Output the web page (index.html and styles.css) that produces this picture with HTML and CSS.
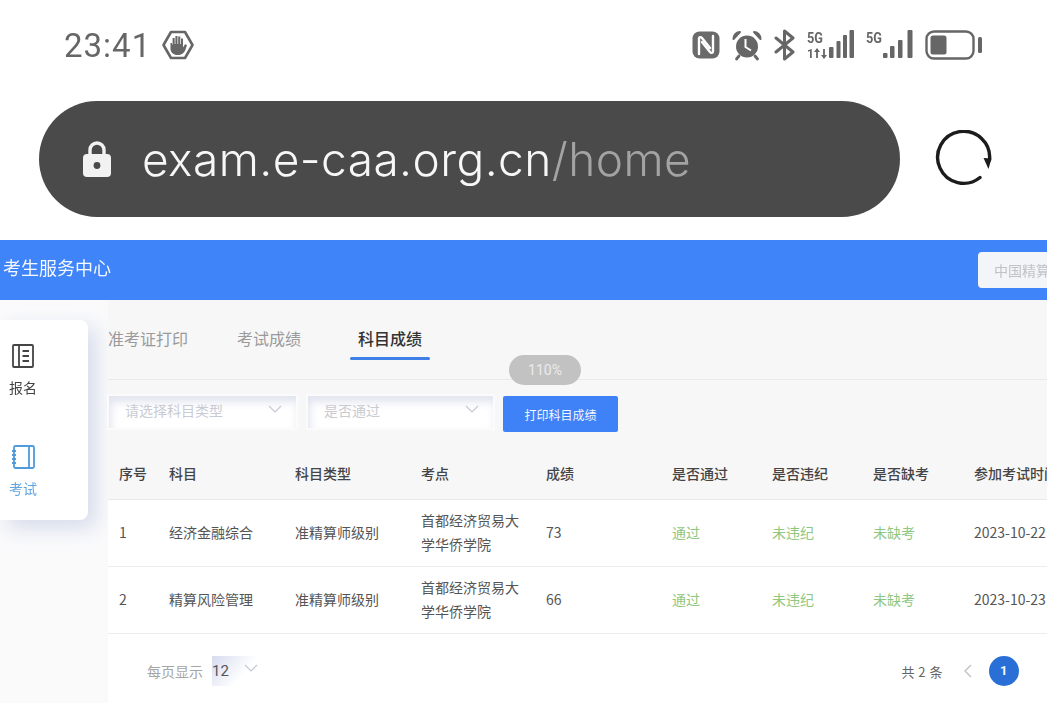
FILE: index.html
```html
<!DOCTYPE html>
<html lang="zh-CN">
<head>
    <meta charset="UTF-8">
    <meta name="viewport" content="width=device-width, initial-scale=1.0">
    <title>考生服务中心</title>
    <link rel="stylesheet" href="styles.css">
</head>
<body>
    <!-- Phone status bar -->
    <div class="status-bar">
        <div class="status-left">
            <span class="clock">23:41</span>
            <svg class="icon-hand" viewBox="0 0 32 32" width="32" height="32">
                <path d="M9 3h14l7.500 13L23 29H9L1.500 16z" fill="none" stroke="#666" stroke-width="2.600" stroke-linejoin="round"/>
                <path d="M8.500 14v5.500c0 4 3 6.500 7 6.500s6.500-1.500 8-5.500l1.500-4.500-2-.8-2 3.300V9.500h-2V15h-.7V7.500h-2.100V15H15.500V7h-2.100v8h-.7V9h-2.100v6.500H10V14z" fill="#666"/>
            </svg>
        </div>
        <div class="status-right">
            <svg viewBox="0 0 28 28" width="28" height="28">
                <rect x="0.500" y="0.500" width="27" height="27" rx="7" fill="#6a6a6a"/>
                <path d="M7 23V7.500c0-1.800 1.800-1.800 3-.5l8 10M21 5v15.500c0 1.800-1.800 1.800-3 .5l-8-10" fill="none" stroke="#fff" stroke-width="2.400" stroke-linecap="round"/>
            </svg>
            <svg viewBox="0 0 32 32" width="32" height="32">
                <circle cx="16" cy="17.500" r="11" fill="#666"/>
                <path d="M14.500 10v8l5.500 3.500" fill="none" stroke="#fff" stroke-width="2"/>
                <path d="M2.500 10C2.500 6 5.500 3 9 3L2.500 10zM29.500 10C29.500 6 26.500 3 23 3L29.500 10z" fill="#666" stroke="#666" stroke-width="2" stroke-linejoin="round"/>
                <path d="M8 27l-2.500 3M24 27l2.500 3" stroke="#666" stroke-width="2.800" stroke-linecap="round"/>
            </svg>
            <svg viewBox="0 0 22 32" width="22" height="32">
                <path d="M2 9l17 14-8.500 7V2L19 9 2 23" fill="none" stroke="#666" stroke-width="3" stroke-linejoin="round" stroke-linecap="round"/>
            </svg>
            <svg class="signal" viewBox="0 0 48 32" width="48" height="32">
                <text x="0" y="14" class="signal-text" textLength="16" lengthAdjust="spacingAndGlyphs">5G</text>
                <text x="0" y="29" class="signal-text small">1</text>
                <path d="M10 29v-9M17 29v-9" stroke="#666" stroke-width="1.800"/>
                <path d="M7 23l3-4 3 4zM14 26l3 4 3-4z" fill="#666"/>
                <rect x="22" y="18" width="4.500" height="11" rx="1" fill="#666"/>
                <rect x="29.500" y="12" width="4" height="17" rx="1" fill="#666"/>
                <rect x="36" y="6" width="4" height="23" rx="1" fill="#666"/>
                <rect x="42.500" y="1" width="4.500" height="28" rx="1" fill="#666"/>
            </svg>
            <svg class="signal" viewBox="0 0 48 32" width="48" height="32">
                <text x="0" y="14" class="signal-text" textLength="16" lengthAdjust="spacingAndGlyphs">5G</text>
                <rect x="17" y="24" width="4.500" height="5" rx="1" fill="#666"/>
                <rect x="24" y="17" width="4.500" height="12" rx="1" fill="#666"/>
                <rect x="32" y="11" width="4.500" height="18" rx="1" fill="#666"/>
                <rect x="41.500" y="1" width="5" height="28" rx="1" fill="#666"/>
            </svg>
            <svg viewBox="0 0 58 30" width="58" height="30">
                <rect x="1.500" y="1.500" width="47" height="27" rx="7.500" fill="none" stroke="#666" stroke-width="2.400"/>
                <rect x="5.500" y="5.500" width="16" height="19" rx="2.500" fill="#666"/>
                <rect x="53" y="7" width="4" height="16" rx="1.500" fill="#666"/>
            </svg>
        </div>
    </div>

    <!-- Browser address bar -->
    <div class="address-row">
        <div class="address-pill">
            <svg class="icon-lock" viewBox="0 0 30 38" width="30" height="38">
                <path d="M8 17V10a7 7 0 0 1 14 0v7" fill="none" stroke="#f2f2f2" stroke-width="3.400"/>
                <rect x="1" y="14" width="28" height="23" rx="4" fill="#f2f2f2"/>
                <circle cx="15" cy="25.500" r="3.400" fill="#4a4a4a"/>
            </svg>
            <span class="url">exam.e-caa.org.cn<span class="url-path">/home</span></span>
        </div>
        <svg class="icon-reload" viewBox="0 0 58 58" width="58" height="58">
            <path d="M46 47.500A26 26 0 1 1 55.500 30" fill="none" stroke="#1c1c1c" stroke-width="3.400" stroke-linecap="round"/>
            <path d="M49.500 28l8 .5-3 10.500z" fill="#1c1c1c"/>
        </svg>
    </div>

    <!-- App header -->
    <header class="app-header">
        <span class="app-title">考生服务中心</span>
        <div class="org-select">中国精算师协会</div>
    </header>

    <div class="app-body">
        <aside class="side-card">
            <div class="side-item">
                <svg viewBox="0 0 24 26" width="24" height="26">
                    <rect x="2" y="2" width="20" height="22" rx="1" fill="none" stroke="#444" stroke-width="1.800"/>
                    <path d="M8 2v22M11.500 8H18M11.500 13H18M11.500 18H18" fill="none" stroke="#444" stroke-width="1.800"/>
                </svg>
                <span>报名</span>
            </div>
            <div class="side-item active">
                <svg viewBox="0 0 24 26" width="24" height="26">
                    <rect x="3" y="2" width="20" height="22" rx="1.500" fill="none" stroke="#4f9bdc" stroke-width="1.800"/>
                    <path d="M18 2v22M1 7h4M1 11h4M1 15h4M1 19h4" fill="none" stroke="#4f9bdc" stroke-width="1.800"/>
                </svg>
                <span>考试</span>
            </div>
        </aside>

        <main class="content">
            <div class="tabs">
                <div class="tab">准考证打印</div>
                <div class="tab">考试成绩</div>
                <div class="tab active">科目成绩</div>
            </div>

            <div class="filters">
                <div class="select select-type">
                    <span>请选择科目类型</span>
                    <svg class="chevron" viewBox="0 0 14 8" width="14" height="8"><path d="M1 1l6 6 6-6" fill="none" stroke="#c6c9d2" stroke-width="1.200"/></svg>
                </div>
                <div class="select select-pass">
                    <span>是否通过</span>
                    <svg class="chevron" viewBox="0 0 14 8" width="14" height="8"><path d="M1 1l6 6 6-6" fill="none" stroke="#c6c9d2" stroke-width="1.200"/></svg>
                </div>
                <button class="print-btn">打印科目成绩</button>
            </div>

            <table class="score-table">
                <colgroup>
                    <col class="col-no"><col class="col-wide"><col class="col-wide"><col class="col-site"><col class="col-wide">
                    <col class="col-pass"><col class="col-flag"><col class="col-flag"><col class="col-date">
                </colgroup>
                <thead>
                    <tr>
                        <th>序号</th><th>科目</th><th>科目类型</th><th>考点</th><th>成绩</th>
                        <th>是否通过</th><th>是否违纪</th><th>是否缺考</th><th>参加考试时间</th>
                    </tr>
                </thead>
                <tbody>
                    <tr>
                        <td>1</td><td>经济金融综合</td><td>准精算师级别</td><td>首都经济贸易大学华侨学院</td><td>73</td>
                        <td class="ok">通过</td><td class="ok">未违纪</td><td class="ok">未缺考</td><td>2023-10-22</td>
                    </tr>
                    <tr>
                        <td>2</td><td>精算风险管理</td><td>准精算师级别</td><td>首都经济贸易大学华侨学院</td><td>66</td>
                        <td class="ok">通过</td><td class="ok">未违纪</td><td class="ok">未缺考</td><td>2023-10-23</td>
                    </tr>
                </tbody>
            </table>

            <div class="pager">
                <div class="page-size">
                    <span>每页显示</span>
                    <div class="size-select">
                        <span>12</span>
                        <svg viewBox="0 0 14 8" width="14" height="8"><path d="M1 1l6 6 6-6" fill="none" stroke="#c6c9d2" stroke-width="1.200"/></svg>
                    </div>
                </div>
                <div class="page-nav">
                    <span class="total">共 2 条</span>
                    <svg viewBox="0 0 8 14" width="8" height="14"><path d="M7 1L1 7l6 6" fill="none" stroke="#c4c4c4" stroke-width="1.500"/></svg>
                    <span class="page-num">1</span>
                </div>
            </div>

            <div class="zoom-badge">110%</div>
        </main>
    </div>
</body>
</html>
```

FILE: styles.css
```css
* {
    margin: 0;
    padding: 0;
    box-sizing: border-box;
}

html, body {
    width: 1047px;
    height: 703px;
    overflow: hidden;
}

body {
    font-family: 'Noto Sans CJK SC', Roboto, sans-serif;
    background: #fff;
    /* the source is a soft phone capture */
    filter: blur(0.4px);
}

/* Status bar */
.status-bar {
    height: 90px;
    padding: 0 64px;
    display: flex;
    align-items: center;
    justify-content: space-between;
}

.status-left {
    display: flex;
    align-items: center;
    gap: 11px;
}

.clock {
    font-family: Roboto, sans-serif;
    font-size: 33px;
    letter-spacing: 1px;
    color: #666;
}

.status-right {
    display: flex;
    align-items: center;
    gap: 11px;
}

.signal-text {
    font-family: Roboto, sans-serif;
    font-size: 15px;
    font-weight: 700;
    fill: #666;
}

.signal-text.small {
    font-size: 12px;
}

/* Address bar */
.address-row {
    height: 150px;
    padding: 11px 0 23px 39px;
    display: flex;
    align-items: center;
    gap: 34px;
}

.address-pill {
    width: 861px;
    height: 116px;
    border-radius: 58px;
    background: #4a4a4a;
    padding-left: 43px;
    display: flex;
    align-items: center;
    gap: 30px;
}

.url {
    font-family: Inter, sans-serif;
    font-size: 46px;
    font-weight: 300;
    letter-spacing: 0.45px;
    color: #f7f7f7;
}

.url-path {
    color: #a3a3a3;
}

/* App header */
.app-header {
    height: 60px;
    background: #3f84f8;
    padding-left: 3px;
    display: flex;
    align-items: center;
    justify-content: space-between;
    overflow: hidden;
}

.app-title {
    font-size: 18px;
    color: #f4f8ff;
    padding-bottom: 6px;
}

.org-select {
    width: 69px;
    height: 36px;
    flex: none;
    background: #f4f5f8;
    border-radius: 4px 0 0 4px;
    padding-left: 16px;
    font-size: 14px;
    line-height: 36px;
    color: #c0c2c8;
    white-space: nowrap;
    overflow: hidden;
}

.app-body {
    height: 403px;
    display: flex;
    background: #fafafb;
}

/* Left side card */
.side-card {
    width: 88px;
    height: 200px;
    margin-top: 20px;
    margin-right: 20px;
    flex: none;
    background: #fff;
    border-radius: 0 8px 8px 0;
    box-shadow: 8px 8px 20px rgba(190, 200, 225, 0.6);
    padding-top: 23px;
    display: flex;
    flex-direction: column;
    gap: 33px;
}

.side-item {
    width: 46px;
    height: 68px;
    display: flex;
    flex-direction: column;
    align-items: center;
    gap: 8px;
    font-size: 14px;
    color: #444;
}

.side-item.active {
    color: #62a6df;
}

/* Main content */
.content {
    position: relative;
    flex: 1;
    min-width: 0;
    background: #f7f7f8;
}

.tabs {
    height: 80px;
    border-bottom: 1px solid #eaeaec;
    padding-top: 27px;
    display: flex;
}

.tab {
    height: 33px;
    font-size: 16px;
    line-height: 22px;
    color: #9a9a9a;
    margin-right: 49px;
}

.tab.active {
    margin-left: 8px;
    position: relative;
    color: #333;
    font-weight: 500;
}

.tab.active::after {
    content: "";
    position: absolute;
    left: -8px;
    right: -8px;
    bottom: 0;
    height: 3px;
    border-radius: 2px;
    background: #3f7fe8;
}

.filters {
    height: 69px;
    padding: 16px 0 0 1px;
    display: flex;
    align-items: flex-start;
}

.select {
    height: 32px;
    padding: 0 14px 0 16px;
    display: flex;
    justify-content: space-between;
    font-size: 14px;
    line-height: 29px;
    color: #c9cbd2;
    background: #fff;
    box-shadow: inset 2px 6px 9px rgba(205, 210, 228, 0.6);
    outline: 2px solid #fbfbfc;
}

.select .chevron {
    margin-top: 9px;
}

.select-type {
    width: 187px;
    margin-right: 12px;
}

.select-pass {
    width: 185px;
    margin-right: 10px;
}

.print-btn {
    width: 115px;
    height: 36px;
    font-family: inherit;
    font-size: 12px;
    color: #f2f6ff;
    background: #3f82f8;
    border: none;
    border-radius: 2px;
}

/* Score table */
.score-table {
    width: 1005px;
    table-layout: fixed;
    border-collapse: collapse;
    background: #fff;
    font-size: 14px;
    color: #555;
}

.col-no { width: 50px; }
.col-wide { width: 126px; }
.col-site { width: 125px; }
.col-pass { width: 100px; }
.col-flag { width: 101px; }
.col-date { width: 150px; }

.score-table th,
.score-table td {
    padding: 0 11px 2px;
    text-align: left;
    line-height: 24px;
    white-space: nowrap;
}

.score-table td:nth-child(4) {
    white-space: normal;
    padding-right: 14px;
}

.score-table thead tr {
    height: 50px;
    background: #f7f7f8;
    border-bottom: 1px solid #e9e9eb;
}

.score-table th {
    font-weight: 500;
    color: #444;
}

.score-table tbody tr {
    height: 67px;
    border-bottom: 1px solid #ececee;
}

.score-table td.ok {
    color: #8fc77f;
}

/* Pagination */
.pager {
    height: 70px;
    background: #fff;
    padding: 5px 28px 0 39px;
    display: flex;
    align-items: center;
    justify-content: space-between;
}

.page-size {
    display: flex;
    align-items: center;
    gap: 9px;
    font-size: 14px;
    color: #a5a5a5;
}

.size-select {
    width: 60px;
    height: 30px;
    display: flex;
    align-items: center;
    gap: 15px;
    font-family: Roboto, sans-serif;
    font-size: 15px;
    color: #555;
    background: linear-gradient(130deg, #d6dbef 0%, #fff 55%);
}

.size-select svg {
    margin-bottom: 6px;
}

.page-nav {
    display: flex;
    align-items: center;
    font-size: 13px;
    letter-spacing: 0.5px;
    color: #666;
}

.total {
    margin-right: 21px;
}

.page-num {
    width: 30px;
    height: 30px;
    margin-left: 17px;
    border-radius: 50%;
    background: #2a6fd6;
    color: #f4f8ff;
    font-family: Roboto, sans-serif;
    font-weight: 700;
    text-align: center;
    line-height: 30px;
}

/* Zoom level toast over the tabs */
.zoom-badge {
    position: absolute;
    left: 401px;
    top: 55px;
    width: 72px;
    height: 30px;
    border-radius: 15px;
    background: #c2c2c2;
    color: #ececec;
    font-family: Roboto, sans-serif;
    font-size: 14px;
    text-align: center;
    line-height: 30px;
}
```
